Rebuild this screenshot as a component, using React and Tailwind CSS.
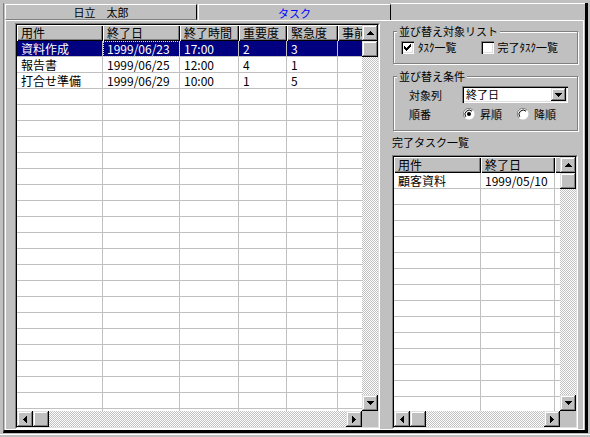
const FONT = "font-[family-name:'Noto_Sans_CJK_JP',sans-serif]"
const RAISED =
  'bg-[#c0c0c0] shadow-[inset_-1px_-1px_#000,inset_1px_1px_#dfdfdf,inset_-2px_-2px_#808080,inset_2px_2px_#fff]'
const SUNKEN =
  'bg-white shadow-[inset_1px_1px_#808080,inset_2px_2px_#000,inset_-1px_-1px_#fff,inset_-2px_-2px_#dfdfdf]'
const CHECKER = 'bg-[image:repeating-conic-gradient(#c0c0c0_0_25%,#ffffff_0_50%)] bg-[length:2px_2px]'
const ETCHED = 'border border-[#808080] shadow-[1px_1px_0_#fff,inset_1px_1px_0_#fff]'

const ARROWS = {
  up: ['M3 0h1v1H3zM2 1h3v1H2zM1 2h5v1H1zM0 3h7v1H0z', 7, 4],
  down: ['M0 0h7v1H0zM1 1h5v1H1zM2 2h3v1H2zM3 3h1v1H3z', 7, 4],
  left: ['M3 0h1v7H3zM2 1h1v5H2zM1 2h1v3H1zM0 3h1v1H0z', 4, 7],
  right: ['M0 0h1v7H0zM1 1h1v5H1zM2 2h1v3H2zM3 3h1v1H3z', 4, 7],
}

function Arrow({ dir }) {
  const [d, w, h] = ARROWS[dir]
  return (
    <svg width={w} height={h} viewBox={`0 0 ${w} ${h}`} shapeRendering="crispEdges">
      <path d={d} fill="#000" />
    </svg>
  )
}

function ScrollButton({ dir }) {
  return (
    <div className={`flex h-[16px] w-[16px] shrink-0 items-center justify-center ${RAISED}`}>
      <Arrow dir={dir} />
    </div>
  )
}

function VScroll() {
  return (
    <div className="flex w-[16px] shrink-0 flex-col">
      <ScrollButton dir="up" />
      <div className={`h-[16px] w-[16px] shrink-0 ${RAISED}`} />
      <div className={`min-h-0 flex-1 ${CHECKER}`} />
      <ScrollButton dir="down" />
    </div>
  )
}

function HScroll() {
  return (
    <div className="flex h-[16px] shrink-0">
      <ScrollButton dir="left" />
      <div className={`h-[16px] w-[16px] shrink-0 ${RAISED}`} />
      <div className={`min-w-0 flex-1 ${CHECKER}`} />
      <ScrollButton dir="right" />
      <div className="h-[16px] w-[16px] shrink-0 bg-[#c0c0c0]" />
    </div>
  )
}

function Grid({ className, columns, rows, selectedRow = -1, focusCol = -1 }) {
  const filled = [...rows]
  while (filled.length < 30) filled.push(columns.map(() => ''))

  return (
    <div
      className={`flex flex-col border border-b-white border-l-[#808080] border-r-white border-t-[#808080] ${className}`}
    >
      <div className="flex min-h-0 flex-1 flex-col border border-b-[#dfdfdf] border-l-black border-r-[#dfdfdf] border-t-black">
        <div className="flex min-h-0 flex-1">
          <div className="min-w-0 flex-1 overflow-hidden bg-white">
            <div className="flex">
              {columns.map((col, j) => (
                <div
                  key={j}
                  className={`h-[16px] shrink-0 overflow-hidden whitespace-nowrap bg-[#c0c0c0] pl-[4px] text-[12px] leading-[16px] shadow-[inset_1px_1px_#fff,inset_-1px_-1px_#000,inset_-2px_-2px_#808080] ${col.w}`}
                >
                  {col.label}
                </div>
              ))}
            </div>
            {filled.map((row, i) => (
              <div
                key={i}
                className={`flex ${i === selectedRow ? 'bg-[#000080] text-white' : 'text-black'}`}
              >
                {columns.map((col, j) => (
                  <div
                    key={j}
                    className={`h-[16px] shrink-0 overflow-hidden whitespace-nowrap border-b border-r border-[#c0c0c0] pl-[4px] text-[12px] leading-[15px] ${col.w} ${
                      i === selectedRow && j === focusCol
                        ? 'outline-1 -outline-offset-1 outline-dotted outline-[#ffff00]'
                        : ''
                    }`}
                  >
                    {row[j]}
                  </div>
                ))}
              </div>
            ))}
          </div>
          <VScroll />
        </div>
        <HScroll />
      </div>
    </div>
  )
}

function Checkbox({ checked }) {
  return (
    <span className={`flex h-[13px] w-[13px] shrink-0 items-center justify-center ${SUNKEN}`}>
      {checked && (
        <svg width="7" height="7" viewBox="0 0 7 7" shapeRendering="crispEdges">
          <path
            d="M6 0h1v1H6zM5 1h2v1H5zM0 2h1v1H0zM4 2h3v1H4zM0 3h2v1H0zM3 3h3v1H3zM0 4h5v1H0zM1 5h3v1H1zM2 6h1v1H2z"
            fill="#000"
          />
        </svg>
      )}
    </span>
  )
}

function Radio({ checked }) {
  return (
    <svg width="12" height="12" viewBox="0 0 12 12" className="shrink-0">
      <circle cx="6" cy="6" r="5.5" fill="#fff" />
      <path d="M10 2.2A5.5 5.5 0 0 0 1.8 9.8" fill="none" stroke="#808080" strokeWidth="1" />
      <path d="M9 3.2A4.2 4.2 0 0 0 2.8 8.8" fill="none" stroke="#000" strokeWidth="1" />
      {checked && <circle cx="6" cy="6" r="2" fill="#000" />}
    </svg>
  )
}

const taskColumns = [
  { label: '用件', w: 'w-[86px]' },
  { label: '終了日', w: 'w-[77px]' },
  { label: '終了時間', w: 'w-[59px]' },
  { label: '重要度', w: 'w-[48px]' },
  { label: '緊急度', w: 'w-[51px]' },
  { label: '事前', w: 'w-[40px]' },
]

const tasks = [
  ['資料作成', '1999/06/23', '17:00', '2', '3', ''],
  ['報告書', '1999/06/25', '12:00', '4', '1', ''],
  ['打合せ準備', '1999/06/29', '10:00', '1', '5', ''],
]

const doneColumns = [
  { label: '用件', w: 'w-[87px]' },
  { label: '終了日', w: 'w-[74px]' },
  { label: '', w: 'w-[40px]' },
]

const doneTasks = [['顧客資料', '1999/05/10', '']]

export default function App() {
  return (
    <div className={`h-[437px] w-[590px] overflow-hidden bg-[#c0c0c0] pl-[3px] pt-[3px] text-black ${FONT}`}>
      <div className="flex h-[430px] w-[585px] flex-col border-b-[3px] border-l border-r-[3px] border-b-black border-l-[#808080] border-r-black">
        <div className="flex h-[17px] shrink-0">
          <div className="w-[1px]" />
          <div className="mt-[1px] flex h-[16px] w-[192px] items-center justify-center border border-b-[#808080] border-l-white border-r-black border-t-white text-[11px] leading-[14px]">
            日立　太郎
          </div>
          <div className="ml-[1px] mt-[1px] flex h-[16px] w-[193px] items-center justify-center border-l border-r border-t border-l-white border-r-black border-t-white text-[11px] leading-[14px] text-[#0000ff]">
            タスク
          </div>
          <div className="flex-1 border-t border-white" />
        </div>

        <div className="ml-[1px] flex h-[410px] w-[579px] border border-white">
          <Grid
            className="ml-[9px] mt-[2px] h-[406px] w-[365px]"
            columns={taskColumns}
            rows={tasks}
            selectedRow={0}
            focusCol={1}
          />

          <div className="ml-[12px] flex w-[186px] flex-col">
            <div className={`relative ml-[1px] mt-[10px] h-[33px] w-[185px] ${ETCHED}`}>
              <span className="absolute -top-[8px] left-[3px] bg-[#c0c0c0] px-[2px] text-[11px] leading-[14px]">
                並び替え対象リスト
              </span>
              <div className="flex items-center pl-[7px] pt-[9px]">
                <Checkbox checked />
                <span className="ml-[4px] text-[11px] leading-[13px]">ﾀｽｸ一覧</span>
                <span className="ml-[24px]">
                  <Checkbox />
                </span>
                <span className="ml-[4px] text-[11px] leading-[13px]">完了ﾀｽｸ一覧</span>
              </div>
            </div>

            <div className={`relative ml-[1px] mt-[12px] h-[55px] w-[185px] ${ETCHED}`}>
              <span className="absolute -top-[8px] left-[3px] bg-[#c0c0c0] px-[2px] text-[11px] leading-[14px]">
                並び替え条件
              </span>
              <div className="flex items-center pl-[15px] pt-[9px]">
                <span className="w-[53px] text-[11px] leading-[14px]">対象列</span>
                <div className={`flex h-[17px] w-[106px] items-stretch p-[2px] ${SUNKEN}`}>
                  <span className="flex-1 pl-[2px] text-[11px] leading-[13px]">終了日</span>
                  <div className={`flex w-[15px] items-center justify-center ${RAISED}`}>
                    <Arrow dir="down" />
                  </div>
                </div>
              </div>
              <div className="mt-[3px] flex h-[15px] items-center pl-[15px]">
                <span className="w-[54px] text-[11px] leading-[14px]">順番</span>
                <Radio checked />
                <span className="ml-[5px] text-[11px] leading-[14px]">昇順</span>
                <span className="ml-[15px]">
                  <Radio />
                </span>
                <span className="ml-[5px] text-[11px] leading-[14px]">降順</span>
              </div>
            </div>

            <div className="mt-[4px] h-[14px] text-[11px] leading-[14px]">完了タスク一覧</div>

            <Grid className="mt-[6px] h-[274px] w-[186px]" columns={doneColumns} rows={doneTasks} />
          </div>
        </div>
      </div>
      <div className="-ml-[3px] mt-[1px] h-[1px] w-[590px] bg-white" />
    </div>
  )
}
